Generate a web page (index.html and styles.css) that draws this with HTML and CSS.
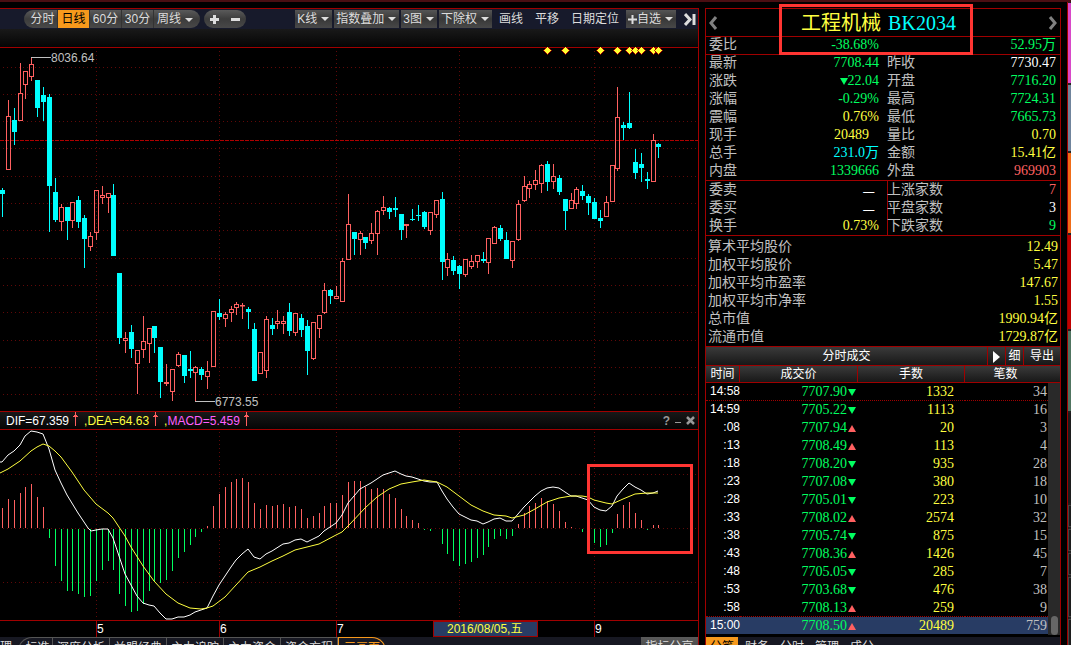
FILE: index.html
```html
<!DOCTYPE html>
<html lang="zh-CN">
<head>
<meta charset="utf-8">
<meta name="viewport" content="width=device-width, initial-scale=1">
<title>工程机械 BK2034</title>
<link rel="stylesheet" href="styles.css">
</head>
<body>
<div class="app">
  <main class="chart-panel">
    <nav class="toolbar">
      <div class="pill periods">
        <button type="button" class="seg">分时</button>
        <button type="button" class="seg active">日线</button>
        <button type="button" class="seg">60分</button>
        <button type="button" class="seg">30分</button>
        <button type="button" class="seg">周线<i class="caret"></i></button>
      </div>
      <div class="pill zoomer">
        <button type="button" class="seg" aria-label="放大"><svg width="9" height="9"><path d="M4.5 0V9M0 4.5H9" stroke="#ddd" stroke-width="3"/></svg></button>
        <button type="button" class="seg" aria-label="缩小"><svg width="9" height="9"><path d="M0 4.5H9" stroke="#ddd" stroke-width="3"/></svg></button>
      </div>
      <div class="tools">
        <button type="button" class="tool">K线<i class="caret"></i></button>
        <button type="button" class="tool">指数叠加<i class="caret"></i></button>
        <button type="button" class="tool">3图<i class="caret"></i></button>
        <button type="button" class="tool">下除权<i class="caret"></i></button>
        <button type="button" class="plain">画线</button>
        <button type="button" class="plain">平移</button>
        <button type="button" class="plain">日期定位</button>
        <button type="button" class="tool"><svg width="9" height="9"><path d="M4.5 0V9M0 4.5H9" stroke="#ddd" stroke-width="2"/></svg>自选<i class="caret"></i></button>
        <button type="button" class="plain jump" aria-label="收起"><svg width="12" height="13"><path d="M1 1L6 6.5L1 12" fill="none" stroke="#ddd" stroke-width="3"/><path d="M10 1V12" stroke="#ddd" stroke-width="3"/></svg></button>
      </div>
    </nav>
    <div class="substrip"></div>
    <svg class="plot" id="price" viewBox="0 47 698 364"></svg>
    <header class="indicator">
      <span class="dif">DIF=67.359</span><svg width="5" height="14"><path d="M2.5 0V14M1 3.5H4M0 4.5H5" stroke="#ff6060"/></svg>
      <span class="dea">,DEA=64.63</span><svg width="5" height="14"><path d="M2.5 0V14M1 3.5H4M0 4.5H5" stroke="#ff6060"/></svg>
      <span class="macd"><b>,</b>MACD=5.459</span><svg width="5" height="14"><path d="M2.5 0V14M1 3.5H4M0 4.5H5" stroke="#ff6060"/></svg>
      <div class="win">
        <button type="button">?</button>
        <button type="button" aria-label="最小化"><svg width="6" height="9"><path d="M0 6.5H6" stroke="#999"/></svg></button>
        <button type="button" aria-label="关闭"><svg width="9" height="9"><path d="M1 1L8 8M8 1L1 8" stroke="#999" stroke-width="2.5"/></svg></button>
      </div>
    </header>
    <div class="macd-wrap">
      <svg class="plot" id="macd" viewBox="0 430 698 190"></svg>
      <div class="callout callout-macd"></div>
    </div>
    <svg class="plot axis" viewBox="0 620 698 17">
      <path d="M0 620.5H698M96.5 621V637M219.5 621V637M336.5 621V637M594.5 621V637" stroke="#a00000"/>
      <rect x="433.500" y="621.500" width="104" height="15" fill="#283c64" stroke="#a00000"/>
      <text x="97" y="633" fill="#fff">5</text><text x="220" y="633" fill="#fff">6</text><text x="337" y="633" fill="#fff">7</text><text x="595" y="633" fill="#fff">9</text>
      <text x="447" y="633" fill="#ffff40">2016/08/05,五</text>
    </svg>
    <nav class="tabs">
      <button type="button" class="tab first">理</button>
      <button type="button" class="tab round">标准</button>
      <button type="button" class="tab">深度分析</button>
      <button type="button" class="tab">益盟经典</button>
      <button type="button" class="tab">主力追踪</button>
      <button type="button" class="tab">主力资金</button>
      <button type="button" class="tab">资金方程</button>
      <button type="button" class="tab on">三画面</button>
      <button type="button" class="share">指标分享</button>
    </nav>
  </main>

  <aside class="side">
    <header class="name">
      <button type="button" aria-label="上一个"><svg width="10" height="14"><path d="M8 1L3 7L8 13" fill="none" stroke="#808080" stroke-width="3"/></svg></button>
      <h1>工程机械 <span>BK2034</span></h1>
      <button type="button" aria-label="下一个"><svg width="10" height="14"><path d="M2 1L7 7L2 13" fill="none" stroke="#808080" stroke-width="3"/></svg></button>
    </header>
    <div class="callout callout-name"></div>
    <dl class="pairs">
      <dt>委比</dt><dd class="g">-38.68%</dd><dt></dt><dd class="g">52.95万</dd>
    </dl>
    <dl class="pairs">
      <dt>最新</dt><dd class="g">7708.44</dd><dt>昨收</dt><dd class="w">7730.47</dd>
      <dt>涨跌</dt><dd class="g"><i class="down"></i>22.04</dd><dt>开盘</dt><dd class="g">7716.20</dd>
      <dt>涨幅</dt><dd class="g">-0.29%</dd><dt>最高</dt><dd class="g">7724.31</dd>
      <dt>震幅</dt><dd class="y">0.76%</dd><dt>最低</dt><dd class="g">7665.73</dd>
      <dt>现手</dt><dd class="y inset">20489</dd><dt>量比</dt><dd class="y">0.70</dd>
      <dt>总手</dt><dd class="c">231.0万</dd><dt>金额</dt><dd class="y">15.41亿</dd>
      <dt>内盘</dt><dd class="g">1339666</dd><dt>外盘</dt><dd class="r">969903</dd>
    </dl>
    <dl class="pairs split">
      <dt>委卖</dt><dd class="w none">—</dd><dt>上涨家数</dt><dd class="r">7</dd>
      <dt>委买</dt><dd class="w none">—</dd><dt>平盘家数</dt><dd class="w">3</dd>
      <dt>换手</dt><dd class="y">0.73%</dd><dt>下跌家数</dt><dd class="g">9</dd>
    </dl>
    <dl class="wide">
      <dt>算术平均股价</dt><dd>12.49</dd>
      <dt>加权平均股价</dt><dd>5.47</dd>
      <dt>加权平均市盈率</dt><dd>147.67</dd>
      <dt>加权平均市净率</dt><dd>1.55</dd>
      <dt>总市值</dt><dd>1990.94亿</dd>
      <dt>流通市值</dt><dd>1729.87亿</dd>
    </dl>
    <header class="trade-title">
      <h2>分时成交</h2>
      <button type="button" class="sq" aria-label="展开"><svg width="7" height="12"><path d="M0 0L7 6L0 12Z" fill="#fff"/></svg></button>
      <button type="button" class="sq">细</button>
      <button type="button" class="export">导出</button>
    </header>
    <div class="trade-body">
      <table class="trades">
        <colgroup><col class="c1"><col class="c2"><col class="c3"><col class="c4"><col class="c5"></colgroup>
        <thead><tr><th>时间</th><th>成交价</th><th>手数</th><th colspan="2">笔数</th></tr></thead>
        <tbody>
          <tr class="dot"><td>14:58</td><td>7707.90<i class="down"></i></td><td>1332</td><td>34</td><td class="track" rowspan="14"><span class="thumb"></span></td></tr>
          <tr><td>14:59</td><td>7705.22<i class="down"></i></td><td>1113</td><td>16</td></tr>
          <tr><td>:08</td><td>7707.94<i class="up"></i></td><td>20</td><td>3</td></tr>
          <tr><td>:13</td><td>7708.49<i class="up"></i></td><td>113</td><td>4</td></tr>
          <tr><td>:18</td><td>7708.20<i class="down"></i></td><td>935</td><td>28</td></tr>
          <tr><td>:23</td><td>7707.08<i class="down"></i></td><td>380</td><td>18</td></tr>
          <tr><td>:28</td><td>7705.01<i class="down"></i></td><td>223</td><td>10</td></tr>
          <tr><td>:33</td><td>7708.02<i class="up"></i></td><td>2574</td><td>32</td></tr>
          <tr><td>:38</td><td>7705.74<i class="down"></i></td><td>875</td><td>15</td></tr>
          <tr><td>:43</td><td>7708.36<i class="up"></i></td><td>1426</td><td>45</td></tr>
          <tr><td>:48</td><td>7705.05<i class="down"></i></td><td>285</td><td>7</td></tr>
          <tr><td>:53</td><td>7703.68<i class="down"></i></td><td>476</td><td>38</td></tr>
          <tr class="dot"><td>:58</td><td>7708.13<i class="up"></i></td><td>259</td><td>9</td></tr>
          <tr class="sel"><td>15:00</td><td>7708.50<i class="up"></i></td><td>20489</td><td>759</td></tr>
        </tbody>
      </table>
    </div>
    <nav class="side-tabs">
      <button type="button" class="on">分笔</button>
      <button type="button">财务</button>
      <button type="button">分时</button>
      <button type="button">管理</button>
      <button type="button">成分</button>
    </nav>
  </aside>

  <div class="strip">
    <i class="pink"></i><i class="slate"></i><i class="orange"></i><i class="red"></i><i class="green"></i><i class="dark tall"></i>
    <i class="dark"></i><i class="dark"></i><i class="dark"></i><i class="dark mid"></i><i class="dark mid"></i>
  </div>
</div>
<script src="chart.js"></script>
</body>
</html>
```
FILE: styles.css
```css
* { box-sizing: border-box; }
html { background: #000; }
body {
  margin: 0;
  background: #000;
  color: #ddd;
  font: 12px/18px "Liberation Sans", "Noto Sans CJK SC", sans-serif;
  overflow: hidden;
}
button {
  margin: 0;
  padding: 0;
  border: 0;
  background: none;
  color: inherit;
  font: inherit;
  white-space: nowrap;
}
h1, h2, dl, dd { margin: 0; font-weight: normal; }

.app {
  display: flex;
  height: 100vh;
  border-top: 2px solid #4a0e12;
  overflow: hidden;
}

/* chart column */
.chart-panel {
  flex: 1;
  min-width: 0;
  margin-top: 6px;
  border-top: 1px solid #a00000;
  border-right: 1px solid #a00000;
}
.toolbar {
  display: flex;
  align-items: center;
  height: 20px;
  padding-left: 24px;
  background: #171a2b;
}
.pill {
  display: flex;
  height: 18px;
  border-radius: 9px;
  overflow: hidden;
  background: linear-gradient(#5a5a5a, #3c3c3c 50%, #484848);
}
.periods { width: 176px; }
.seg {
  flex: 0 0 32px;
  border-right: 1px solid #333;
}
.seg:first-child { flex-basis: 34px; padding-left: 4px; }
.seg:last-child { flex: 1; border-right: 0; padding-right: 4px; }
.seg.active { background: #f7991c; color: #000; }
.zoomer {
  align-items: center;
  width: 42px;
  margin-left: 4px;
}
.zoomer .seg,
.zoomer .seg:last-child { flex: 1; border: 0; line-height: 0; padding: 0; }
.tools {
  display: flex;
  align-items: center;
  gap: 2px;
  margin-left: auto;
  padding-right: 2px;
}
.tool {
  display: flex;
  align-items: center;
  height: 18px;
  padding: 0 3px 0 2px;
  background: linear-gradient(#555, #383838 50%, #484848);
}
.plain { padding: 0 5px; }
.plain.jump { line-height: 0; padding: 0 0 0 6px; }
.caret {
  display: inline-block;
  margin-left: 4px;
  border: 4px solid transparent;
  border-top-color: #ddd;
  border-bottom: 0;
  vertical-align: middle;
}
.substrip {
  height: 18px;
  background: linear-gradient(#191919, #050505);
}
.plot {
  display: block;
  width: 100%;
  height: auto;
  font: 12px "Liberation Sans", "Noto Sans CJK SC", sans-serif;
}
.indicator {
  display: flex;
  align-items: center;
  gap: 4px;
  height: 19px;
  padding: 0 3px 0 6px;
  border-top: 1px solid #a00000;
  border-bottom: 1px solid #a00000;
  background: linear-gradient(#181818, #050505);
}
.indicator > svg { margin: -4px 2px 0 0; }
.dif { color: #fff; }
.dea { color: #ffff40; }
.macd { color: #ff60ff; }
.macd b { color: #ffff40; font-weight: normal; }
.win {
  display: flex;
  align-items: center;
  gap: 5px;
  margin-left: auto;
  color: #999;
  font-weight: bold;
}
.win svg { display: block; }
.macd-wrap { position: relative; }
.callout {
  position: absolute;
  border: 3px solid #ff3532;
  pointer-events: none;
}
.callout-macd {
  left: 84.1%;
  top: 18%;
  width: 106px;
  height: 90px;
}
.tabs {
  display: flex;
  height: 18px;
  background: #171822;
  line-height: 20px;
}
.tab {
  width: 57px;
  border: 1px solid #555;
  border-width: 1px 1px 0 0;
}
.tab.first { width: 18px; border: 0; padding-right: 6px; }
.tab.round {
  width: 35px;
  padding-left: 4px;
  border-left-width: 1px;
  border-radius: 14px 0 0 0;
}
.tab.on {
  width: 48px;
  border-color: #f7991c;
  border-left-width: 1px;
  border-radius: 0 14px 0 0;
  color: #f7991c;
}
.share {
  width: 57px;
  margin-left: auto;
  background: linear-gradient(#5a5a5a, #3c3c3c);
}

/* quote column */
.side {
  position: relative;
  flex: none;
  width: 356px;
  margin: 6px 6px 0;
  border: 1px solid #a00000;
  border-bottom: 0;
  font-family: "Liberation Serif", "Noto Sans CJK SC", serif;
  font-size: 14px;
}
.name {
  display: flex;
  align-items: center;
  justify-content: space-between;
  height: 27px;
  padding: 0 2px;
}
.name h1 {
  padding-right: 9px;
  color: #ffff40;
  font-size: 20px;
  line-height: 26px;
}
.name h1 span { margin-left: 2px; color: #00ffff; }
.name svg { display: block; }
.callout-name {
  left: 73px;
  top: -5px;
  width: 194px;
  height: 51px;
}
.pairs, .wide {
  display: grid;
  box-shadow: inset 0 1px #a00000;
  grid-auto-rows: 18px;
  white-space: nowrap;
}
.pairs { grid-template-columns: 60px 1fr 64px 113px; padding: 0 4px 0 3px; }
.pairs dt:nth-of-type(even) { padding-left: 8px; }
.split {
  padding-top: 1px;
  background: linear-gradient(#a00000, #a00000) 181px 0 / 1px 100% no-repeat;
}
dt { color: #c0c0c0; }
dd { text-align: right; }
.wide {
  grid-template-columns: auto 1fr;
  padding: 3px 2px 0;
}
.wide dd { color: #ffff40; }
.g { color: #00ff60; }
.y { color: #ffff40; }
.w { color: #fff; }
.c { color: #00ffff; }
.r { color: #ff6060; }
.pairs .inset { padding-right: 10px; }
.pairs .none {
  padding-right: 4px;
  font-family: "Noto Sans CJK SC", sans-serif;
}
.down, .up {
  display: inline-block;
  border: 4px solid transparent;
  margin-left: 1px;
}
.down { border-top: 7px solid #00ff60; border-bottom: 0; }
.up { border-bottom: 7px solid #ff6060; border-top: 0; }
.trade-title {
  display: flex;
  height: 19px;
  border-top: 1px solid #a00000;
  background: linear-gradient(#3a3a3a, #181818);
  color: #fff;
  font-size: 12px;
  line-height: 18px;
}
.trade-title h2 { flex: 1; font-size: 12px; text-align: center; }
.sq, .export { border-left: 1px solid #a00000; }
.sq { width: 18px; }
.sq svg { vertical-align: middle; }
.export { width: 37px; }
.trades {
  width: 100%;
  border-collapse: separate;
  border-spacing: 0;
  table-layout: fixed;
}
.c1 { width: 34px; }
.c2 { width: 118px; }
.c3 { width: 107px; }
.c5 { width: 12px; }
.trades th {
  height: 18px;
  padding: 0;
  border: 1px solid #a00000;
  border-left: 0;
  background: linear-gradient(#3a3a3a, #181818);
  color: #fff;
  font-weight: normal;
  font-size: 12px;
  line-height: 16px;
}
.trades th:last-child { border-right: 0; padding-right: 14px; }
.trades td {
  height: 18px;
  padding: 0;
  text-align: right;
  line-height: 17px;
  border-bottom: 1px solid transparent;
}
.trades td:nth-child(1) {
  color: #fff;
  font-family: "Liberation Sans", sans-serif;
  font-size: 12px;
}
.trades td:nth-child(2) { padding-right: 2px; color: #00ff60; }
.trades td:nth-child(3) { padding-right: 11px; color: #ffff40; }
.trades td:nth-child(4) { padding-right: 1px; color: #c0c0c0; }
.trades .dot td { border-bottom: 1px dotted #a00000; }
.trades .sel td { background: #283c64; background-clip: padding-box; }
.trades td.track {
  background: #292929;
  border: 0;
  vertical-align: bottom;
}
.thumb {
  display: block;
  width: 7px;
  height: 19px;
  margin-left: 3px;
  border-radius: 4px;
  background: #666;
}
.side-tabs {
  display: flex;
  gap: 11px;
  margin-top: 2px;
  background: #171822;
  font-size: 12px;
  line-height: 20px;
}
.side-tabs .on {
  width: 32px;
  margin-right: -4px;
  background: #f7991c;
  color: #000;
}
.side-tabs button + button { width: 24px; }

/* colour strip */
.strip {
  display: flex;
  flex-direction: column;
  gap: 2px;
  width: 4px;
  padding-top: 1px;
  border-left: 1px solid #a00000;
  background: #222;
}
.strip i { flex: none; height: 80px; }
.strip .pink { background: #d848c8; }
.strip .slate { height: 66px; background: #70849c; }
.strip .orange { background: #f06c18; }
.strip .red { height: 94px; background: #c00000; }
.strip .green { background: #507460; }
.strip .dark { height: 22px; background: #1c1c1c; border: 1px solid #444; border-right: 0; }
.strip .tall { height: 90px; border: 0; }
.strip .mid { height: 40px; }
```
FILE: chart.js
```js
// x, direction (1 rise, 0 fall), high, body top, body bottom, low
const candles = [
[2,0,188,190,194,217],[8,1,100,116,170,170],[14,0,108,120,132,145],[20,1,63,93,121,121],[25,1,71,71,85,99],
[31,1,57,64,77,81],[37,0,80,80,108,117],[43,0,87,95,102,121],[49,0,94,97,186,232],[55,0,178,192,220,222],
[61,1,204,207,222,231],[67,0,207,207,221,240],[72,1,202,202,221,228],[78,0,196,200,222,228],[84,0,215,218,239,268],
[90,1,232,236,247,251],[96,1,190,190,233,240],[102,1,186,195,198,204],[108,1,193,193,198,213],[113,0,184,195,256,256],
[119,0,273,273,338,344],[125,1,332,338,341,353],[131,0,325,332,349,358],[137,1,350,350,364,394],[143,1,316,341,350,358],
[149,1,328,328,344,363],[154,0,326,326,338,353],[160,0,347,347,382,398],[166,1,364,382,384,386],[172,1,369,369,392,401],
[178,1,352,354,366,367],[184,0,355,355,376,383],[190,0,351,369,371,378],[195,1,366,367,373,402],[201,0,367,369,375,380],
[207,1,361,371,377,389],[213,1,311,311,367,367],[219,0,299,313,317,320],[225,1,312,314,319,327],[231,1,306,309,313,322],
[236,1,302,304,308,315],[242,1,303,305,306,319],[248,0,307,309,312,329],[254,0,323,329,381,381],[260,1,352,352,374,374],
[266,1,316,319,371,378],[272,0,318,325,329,335],[277,1,310,321,324,329],[283,1,316,321,324,334],[289,0,303,312,331,336],
[295,1,313,313,333,336],[301,0,314,318,330,337],[307,0,320,326,351,375],[313,1,322,322,359,360],[319,1,315,315,329,338],
[324,1,283,290,313,314],[330,0,289,290,296,304],[336,1,286,296,299,299],[342,1,258,261,302,302],[348,1,194,224,260,260],
[354,0,232,232,239,255],[360,1,231,233,240,255],[365,0,237,237,243,249],[371,1,223,233,241,244],[377,1,210,211,234,255],
[383,1,196,207,211,215],[389,0,207,208,212,219],[395,0,197,208,210,217],[401,0,214,214,230,240],[406,1,224,224,226,238],
[412,0,209,219,220,221],[418,0,205,215,216,221],[424,0,211,212,227,229],[430,1,212,212,231,235],[436,1,200,200,215,218],
[442,0,192,199,262,280],[447,1,253,259,268,276],[453,0,256,260,271,275],[459,0,265,266,274,289],[465,1,259,259,275,277],
[471,1,255,261,267,269],[477,1,255,255,262,268],[483,0,252,259,261,263],[488,1,238,238,263,274],[494,1,226,227,244,244],
[500,0,225,228,239,241],[506,0,232,240,259,259],[512,1,241,241,261,268],[518,1,200,204,240,241],[524,1,176,186,201,202],
[529,1,181,184,189,198],[535,1,170,180,185,190],[541,1,164,165,184,193],[547,0,161,164,182,191],[553,1,164,176,182,189],
[559,0,175,178,192,195],[565,0,199,199,211,230],[571,1,193,200,209,209],[576,1,187,189,204,209],[582,0,185,191,196,200],
[588,0,194,196,203,215],[594,0,198,202,219,219],[600,0,210,218,221,228],[606,1,196,202,217,217],[612,1,165,165,202,202],
[617,1,87,117,169,171],[623,0,122,125,128,140],[629,0,92,123,128,129],[635,0,149,162,173,179],[641,0,153,164,168,182],
[647,0,172,179,181,189],[653,1,134,140,182,182],[658,0,143,144,147,158]];

// end of each MACD bar, in candle order; 0 means no bar
const bars = [508,499,500,493,487,484,497,507,538,566,581,591,591,594,597,596,581,570,561,570,594,606,612,611,604,591,581,583,580,571,
558,552,545,537,532,526,506,494,487,482,479,478,482,503,509,505,506,505,504,507,506,509,518,516,513,506,503,503,495,482,
481,481,487,489,488,489,494,498,509,516,520,523,530,531,0,544,554,561,566,564,562,558,555,547,539,536,539,536,524,513,
506,503,498,501,504,511,522,527,0,532,0,543,547,545,533,514,505,502,513,520,530,525,525];

const dif = "0,462 2,462 8,455 14,451 20,445 25,436 31,431 37,432 43,434 49,449 55,470 61,483 67,495 78,513 88,528 91,531 96,530 102,529 108,529 113,538 119,556 125,574 131,585 137,596 143,603 149,605 154,606 160,613 166,619 172,619 178,617 184,617 190,615 195,612 201,610 207,608 213,596 219,585 231,567 236,560 242,554 248,549 254,557 260,559 266,554 272,551 283,544 289,543 295,540 301,539 307,542 313,539 319,536 324,531 330,527 336,523 342,515 348,503 354,496 360,489 371,483 383,475 389,473 395,471 401,474 406,476 412,477 418,479 424,481 430,482 437,482 442,491 447,499 453,507 459,514 465,517 471,520 477,521 483,524 488,522 494,519 500,518 506,521 512,521 518,514 524,507 529,502 535,496 541,491 547,488 553,487 559,488 565,492 571,496 576,496 582,498 588,500 594,507 600,510 606,511 612,506 617,496 623,489 629,483 635,487 641,490 647,494 653,493 658,491";
const dea = "0,473 8,469 20,461 31,451 37,447 43,444 49,446 55,451 61,457 72,472 84,490 96,504 108,513 113,518 119,527 125,536 131,547 143,566 154,581 166,594 178,603 190,608 201,609 207,608 213,606 225,597 236,585 248,572 260,567 272,561 283,556 295,550 307,547 319,544 336,535 342,532 350,524 365,508 377,497 389,489 401,484 412,482 424,480 437,482 447,487 459,496 471,505 483,511 494,515 506,516 512,518 524,515 535,509 547,502 559,498 571,496 582,496 588,497 594,500 606,503 612,504 623,499 635,494 647,493 658,493";

const months = [96, 219, 336, 459, 594];
const grid = (rows, top, bottom) =>
  rows.map(y => `<path d="M3 ${y}.5H697" stroke="#600808" stroke-dasharray="1 3"/>`).join("") +
  months.map(x => `<path d="M${x}.5 ${top}V${bottom}" stroke="#600808" stroke-dasharray="1 3"/>`).join("");

let price = grid([67, 94, 121, 148, 176, 203, 230, 258, 285, 312, 340, 367, 394], 51, 411);
price += `<path d="M0 47.5H698" stroke="#a00000"/><path d="M0 140.5H698" stroke="#b00000" stroke-dasharray="4 1"/>`;
for (const [x, up, high, top, bottom, low] of candles) {
  const c = x + 0.5;
  if (up) {
    price += `<path d="M${c} ${high}V${top}M${c} ${bottom}V${low}" stroke="#ff6060"/>`;
    price += `<rect x="${x - 1.5}" y="${top + 0.5}" width="4" height="${Math.max(bottom - top - 1, 0.5)}" fill="none" stroke="#ff6060"/>`;
  } else {
    price += `<path d="M${c} ${high}V${low}" stroke="#00ffff"/><rect x="${x - 2}" y="${top}" width="5" height="${bottom - top}" fill="#00ffff"/>`;
  }
}
for (const x of [547, 565, 600, 617, 629, 635, 641, 653, 658]) {
  price += `<path d="M${x + 0.5} 46.5L${x + 4.5} 50.5L${x + 0.5} 54.5L${x - 3.5} 50.5Z" fill="#ffff30" stroke="#a00000"/>`;
}
price += `<path d="M31 57.5H51M195 401.5H215" stroke="#c0c0c0"/>
<text x="51" y="62" fill="#c0c0c0">8036.64</text><text x="215" y="406" fill="#c0c0c0">6773.55</text>`;
document.getElementById("price").innerHTML = price;

let macd = grid([474, 528, 582], 432, 620);
bars.forEach((end, i) => {
  if (!end) return;
  const red = end < 528;
  macd += `<path d="M${candles[i][0] + 0.5} ${red ? 528 : 529}V${end}" stroke="${red ? "#ff6060" : "#00ff60"}"/>`;
});
macd += `<polyline points="${dif}" fill="none" stroke="#fff"/><polyline points="${dea}" fill="none" stroke="#ffff40"/>`;
document.getElementById("macd").innerHTML = macd;
```
